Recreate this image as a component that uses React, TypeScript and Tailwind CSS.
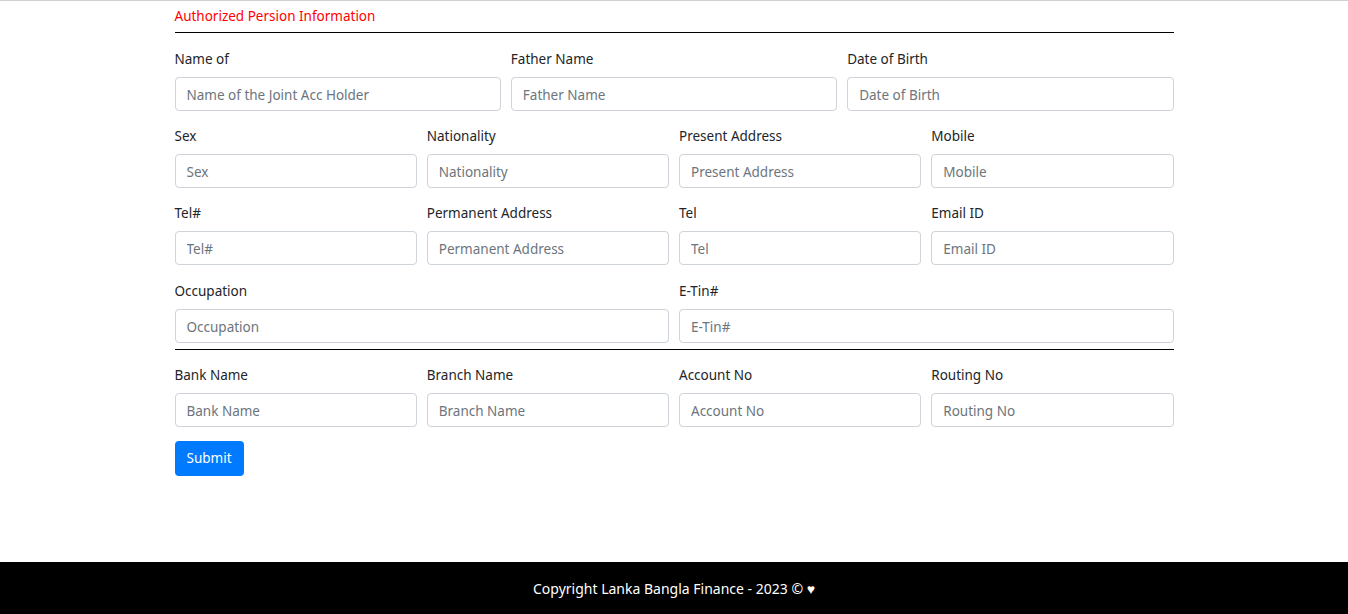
import React from "react";

const rowFour = [
  ["Sex", "Sex"],
  ["Nationality", "Nationality"],
  ["Present Address", "Present Address"],
  ["Mobile", "Mobile"],
];

const rowFive = [
  ["Tel#", "Tel#"],
  ["Permanent Address", "Permanent Address"],
  ["Tel", "Tel"],
  ["Email ID", "Email ID"],
];

const bankRow = [
  ["Bank Name", "Bank Name"],
  ["Branch Name", "Branch Name"],
  ["Account No", "Account No"],
  ["Routing No", "Routing No"],
];

const Field = ({ label, placeholder, className = "" }: { label: string; placeholder: string; className?: string }) => (
  <div className={`mb-[14px] ${className}`}>
    <label className="block leading-[21px] pt-[1px] mb-[7px] text-[#212529]">{label}</label>
    <input
      type="text"
      placeholder={placeholder}
      className="block w-full h-[34px] px-[11px] pt-[2px] border border-[#ced4da] rounded-[4px] text-[#495057] placeholder:text-[#6c757d] outline-none"
    />
  </div>
);

const App = () => {
  return (
    <div className="min-h-[614px] flex flex-col bg-white text-[13.5px]" style={{ fontFamily: '"Noto Sans", "Open Sans", sans-serif' }}>
      <div className="border-t border-[#d0d0d0]"></div>
      <div className="flex-1">
        <form className="w-[999px] mx-auto pt-[5px]">
          <h5 className="text-[#ff0000] leading-[21px]">Authorized Persion Information</h5>
          <hr className="mt-[5px] mb-[15px] border-t border-black" />

          <div className="grid grid-cols-3 gap-x-[10px]">
            <Field label="Name of" placeholder="Name of the Joint Acc Holder" />
            <Field label="Father Name" placeholder="Father Name" />
            <Field label="Date of Birth" placeholder="Date of Birth" />
          </div>

          <div className="grid grid-cols-4 gap-x-[10px]">
            {rowFour.map(([l, p]) => (
              <Field key={l} label={l} placeholder={p} />
            ))}
            {rowFive.map(([l, p]) => (
              <Field key={l} className="!mb-[15px]" label={l} placeholder={p} />
            ))}
            <Field className="col-span-2 !mb-[6px]" label="Occupation" placeholder="Occupation" />
            <Field className="col-span-2 !mb-[6px]" label="E-Tin#" placeholder="E-Tin#" />
          </div>

          <hr className="mb-[14px] border-t border-black" />

          <div className="grid grid-cols-4 gap-x-[10px]">
            {bankRow.map(([l, p]) => (
              <Field key={l} label={l} placeholder={p} />
            ))}
          </div>

          <button
            type="button"
            className="h-[35px] px-[12px] bg-[#007bff] text-white rounded-[4px] leading-[21px]"
          >
            Submit
          </button>
        </form>
      </div>
      <footer className="h-[52px] bg-black text-white text-[14px] flex items-center justify-center">
        Copyright Lanka Bangla Finance - 2023 © ♥
      </footer>
    </div>
  );
};

export default App;
